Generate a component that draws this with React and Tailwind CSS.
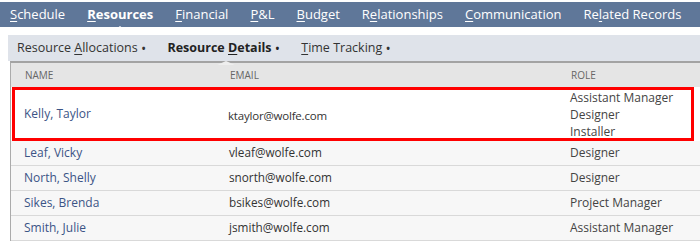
import React from "react";

const F = { fontFamily: '"Open Sans", "Liberation Sans", sans-serif' };

function U({ children }) {
  return <span className="underline underline-offset-2">{children}</span>;
}

const rows = [
  ["Leaf, Vicky", "vleaf@wolfe.com", "Designer"],
  ["North, Shelly", "snorth@wolfe.com", "Designer"],
  ["Sikes, Brenda", "bsikes@wolfe.com", "Project Manager"],
  ["Smith, Julie", "jsmith@wolfe.com", "Assistant Manager"],
];

export default function App() {
  return (
    <div className="w-[700px] h-[241px] overflow-hidden bg-white" style={F}>
      {/* top nav */}
      <div className="mt-[2px] h-[25px] bg-[#5f7799] flex items-center pl-[10px] gap-[22px] text-[13px] text-white whitespace-nowrap">
        <span><U>S</U>chedule</span>
        <span className="relative font-bold">
          <U>R</U>esources
          <span className="absolute left-1/2 -translate-x-1/2 bottom-[-6px] w-0 h-0 border-l-[5px] border-r-[5px] border-b-[4px] border-l-transparent border-r-transparent border-b-white" />
        </span>
        <span><U>F</U>inancial</span>
        <span><U>P</U>&amp;L</span>
        <span><U>B</U>udget</span>
        <span>R<U>e</U>lationships</span>
        <span><U>C</U>ommunication</span>
        <span>Re<U>l</U>ated Records</span>
      </div>

      {/* sub tabs */}
      <div className="mt-[8px] ml-[8px] h-[26px] bg-[#dfe3ea] flex items-center pl-[9px] gap-[22px] text-[12.5px] text-[#333] whitespace-nowrap">
        <span>Resource <U>A</U>llocations<span className="ml-[4px] text-[10px] font-bold align-middle">•</span></span>
        <span className="relative font-bold text-[#222]">
          Resource <U>D</U>etails<span className="ml-[4px] text-[10px] align-middle">•</span>
          <span className="absolute left-[50px] bottom-[-8px] w-0 h-0 border-l-[9px] border-r-[9px] border-b-[4px] border-l-transparent border-r-transparent border-b-[#eeeeee]" />
        </span>
        <span><U>T</U>ime Tracking<span className="ml-[4px] text-[10px] font-bold align-middle">•</span></span>
      </div>

      {/* table */}
      <div className="ml-[10px] border-t-2 border-l border-t-[#a3a3a3] border-l-[#ababab] text-[12px]">
        <div className="h-[24px] bg-[#e5e5e5] grid grid-cols-[205px_341px_1fr] items-center text-[10px] text-[#666] uppercase">
          <span className="pl-[14px]">Name</span>
          <span className="pl-[14px]">Email</span>
          <span className="pl-[14px]">Role</span>
        </div>
        <div className="relative h-[54px] bg-white grid grid-cols-[205px_341px_1fr] items-center">
          <span className="pl-[13px] text-[#3b5486]">Kelly, Taylor</span>
          <span className="pl-[12px] pt-[3px] text-[11.5px] tracking-[-0.2px] text-[#333]">ktaylor@wolfe.com</span>
          <div className="pl-[13px] text-[#444] leading-[17px] flex flex-col">
            <span>Assistant Manager</span>
            <span>Designer</span>
            <span>Installer</span>
          </div>
          <div className="absolute left-[1px] right-[6px] top-0 bottom-0 border-[3px] border-[#ff0000] pointer-events-none" />
        </div>
        {rows.map(([n, e, r]) => (
          <div key={n} className="h-[25px] bg-[#f7f7f7] border-b border-[#d9d9d9] grid grid-cols-[205px_341px_1fr] items-center">
            <span className="pl-[13px] text-[#3b5486]">{n}</span>
            <span className="pl-[13px] text-[11.75px] text-[#333]">{e}</span>
            <span className="pl-[13px] text-[#444]">{r}</span>
          </div>
        ))}
      </div>
    </div>
  );
}
